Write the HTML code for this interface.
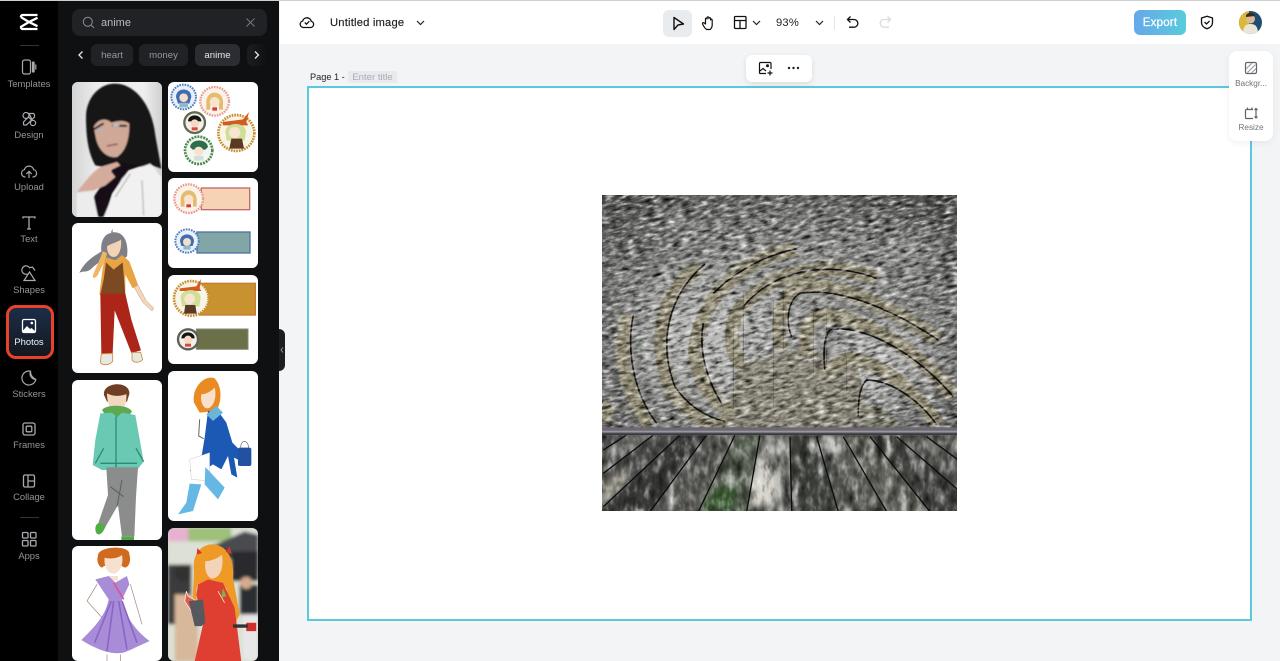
<!DOCTYPE html>
<html><head><meta charset="utf-8"><style>
*{box-sizing:border-box;margin:0;padding:0}
html,body{width:1280px;height:661px;overflow:hidden;background:#f3f4f6;font-family:"Liberation Sans",sans-serif}
.a{position:absolute}
.rl{position:absolute;left:0;width:58px;text-align:center;font-size:9.4px;color:#93959a;line-height:11px;margin-top:-1px}
.card{position:absolute;width:90px;background:#fff;border-radius:6px;overflow:hidden}
.card svg{display:block;width:90px}
.chip{position:absolute;top:44px;height:22px;border-radius:6px;background:#212226;color:#96989d;font-size:9.6px;line-height:23px;text-align:center}
svg.i{position:absolute;overflow:visible;fill:none}
</style></head><body>
<div class="a" style="left:0;top:0;width:1280px;height:1px;background:#cfcfcf;z-index:9"></div>
<div class="a" style="left:0;top:0;width:58px;height:661px;background:#000"></div>
<div class="a" style="left:58px;top:0;width:221px;height:661px;background:#0f1012"></div>
<div class="a" style="left:280px;top:1px;width:1000px;height:43px;background:#fff"></div>

<!-- rail -->
<svg class="i" style="left:18px;top:13px" width="22" height="18" viewBox="0 0 22 18"><path d="M3 4.200L11 9 3 13.800a1.800 1.800 0 0 0 1.500 2.200H19.500M3 4.200A1.800 1.800 0 0 1 4.500 2H19.500M19.500 4.800L11 9 19.500 13.200" stroke="#fff" stroke-width="2.300"/></svg>
<div class="a" style="left:20px;top:45px;width:19px;height:1px;background:#333"></div>
<svg class="i" style="left:20px;top:58px" width="18" height="18" stroke="#a8aaaf" stroke-width="1.200"><rect x="2.500" y="2" width="8" height="14" rx="2"/><rect x="12.500" y="4" width="1.600" height="10" rx=".8" fill="#a8aaaf"/><path d="M15.800 6.500v5"/></svg>
<div class="rl" style="top:79px">Templates</div>
<svg class="i" style="left:20px;top:110px" width="18" height="18" stroke="#a8aaaf" stroke-width="1.200"><circle cx="6" cy="5.500" r="3"/><path d="M9 3.500h4.500l1 1V7L12 9.500zM3.500 14.500V12l5-5 3 3-5 5H4z"/><circle cx="13" cy="13" r="2.600"/></svg>
<div class="rl" style="top:130px">Design</div>
<svg class="i" style="left:20px;top:162px" width="18" height="18" stroke="#a8aaaf" stroke-width="1.200"><path d="M5.500 15H5a3.700 3.700 0 0 1-.6-7.300 4.800 4.800 0 0 1 9.300 0A3.700 3.700 0 0 1 13.200 15h-.7"/><path d="M9 16V9.500M6.300 12L9 9.300 11.700 12"/></svg>
<div class="rl" style="top:182px">Upload</div>
<svg class="i" style="left:21px;top:215px" width="16" height="16" stroke="#a8aaaf" stroke-width="1.300"><path d="M2 3.500V2h12v1.500M8 2v12M6 14h4"/></svg>
<div class="rl" style="top:234px">Text</div>
<svg class="i" style="left:20px;top:265px" width="18" height="18" stroke="#a8aaaf" stroke-width="1.200"><path d="M7.500 9A4.200 4.200 0 1 1 9.500 2.700L12.500 2l2.500 3.500"/><path d="M9.500 7L15 15.500H4z"/></svg>
<div class="rl" style="top:285px">Shapes</div>

<div class="a" style="left:6px;top:305px;width:48px;height:54px;border:3px solid #e8432a;border-radius:10px;background:linear-gradient(180deg,#1c2d49,#14181f)"></div>
<svg class="i" style="left:21px;top:318px" width="16" height="16"><rect x="1.500" y="1.500" width="13" height="13" rx="1.500" stroke="#fff" stroke-width="1.300"/><path d="M2 12.500L6 8l3 3 1.500-1 3.500 3v1.500H2z" fill="#fff"/><circle cx="10.800" cy="5" r="1.300" fill="#fff"/></svg>
<div class="rl" style="top:337px;color:#f2f3f5">Photos</div>

<svg class="i" style="left:20px;top:369px" width="18" height="18" stroke="#a8aaaf" stroke-width="1.200"><path d="M10.500 2.200a7 7 0 1 0 5.300 8.300A6 6 0 0 1 10.500 2.200z"/><path d="M10.500 2.200c0 2 0 5 5.300 8.300"/></svg>
<div class="rl" style="top:389px">Stickers</div>
<svg class="i" style="left:21px;top:421px" width="16" height="16" stroke="#a8aaaf" stroke-width="1.300"><rect x="2" y="2" width="12" height="12" rx="2"/><rect x="5.200" y="5.200" width="5.600" height="5.600" rx="1"/></svg>
<div class="rl" style="top:440px">Frames</div>
<svg class="i" style="left:21px;top:473px" width="16" height="16" stroke="#a8aaaf" stroke-width="1.300"><rect x="2.500" y="2" width="11" height="12" rx="1.500"/><path d="M7 2v12M7 8h6.500"/></svg>
<div class="rl" style="top:492px">Collage</div>
<div class="a" style="left:20px;top:517px;width:19px;height:1px;background:#333"></div>
<svg class="i" style="left:21px;top:531px" width="16" height="16" stroke="#a8aaaf" stroke-width="1.300"><rect x="1.500" y="1.500" width="5.500" height="5.500" rx="1"/><rect x="9.500" y="1.500" width="5.500" height="5.500" rx="1"/><rect x="1.500" y="9.500" width="5.500" height="5.500" rx="1"/><rect x="9.500" y="9.500" width="5.500" height="5.500" rx="1"/></svg>
<div class="rl" style="top:551px">Apps</div>

<!-- search -->
<div class="a" style="left:72px;top:9px;width:195px;height:27px;background:#212226;border-radius:8px"></div>
<svg class="i" style="left:82px;top:16px" width="13" height="13" stroke="#8e9095" stroke-width="1"><circle cx="5.800" cy="5.800" r="4.500"/><path d="M9.200 9.200L12 12"/></svg>
<div class="a" style="left:101px;top:17px;font-size:11px;line-height:13px;color:#b9bbc0">anime</div>
<svg class="i" style="left:246px;top:18px" width="9" height="9" stroke="#77797e" stroke-width="1"><path d="M.5.500l8 8M8.500.500l-8 8"/></svg>
<svg class="i" style="left:78px;top:51px" width="6" height="8" stroke="#e8e8ea" stroke-width="1.300"><path d="M4.500.500L1 4l3.500 3.500"/></svg>
<div class="chip" style="left:91px;width:42px">heart</div>
<div class="chip" style="left:139px;width:49px">money</div>
<div class="chip" style="left:195px;width:45px;background:#2c2d32;color:#e4e5e8">anime</div>
<div class="chip" style="left:247px;width:20px;background:linear-gradient(90deg,#1c1d20,#0f1012)"></div>
<svg class="i" style="left:254px;top:51px" width="6" height="8" stroke="#e8e8ea" stroke-width="1.300"><path d="M1 .500L4.500 4 1 7.500"/></svg>

<!-- cards -->
<div class="card" style="left:72px;top:82px;height:135px;background:#e6e6e6"><svg viewBox="0 0 270 405" height="135">
<defs><linearGradient id="bgp" x1="0" y1="0" x2="1" y2="0"><stop offset="0" stop-color="#d4d4d4"/><stop offset=".3" stop-color="#eeeeee"/><stop offset=".8" stop-color="#eeeeee"/><stop offset="1" stop-color="#d0d0d0"/></linearGradient><filter id="sb"><feGaussianBlur stdDeviation="2.500"/></filter></defs>
<rect width="270" height="405" fill="url(#bgp)"/>
<g filter="url(#sb)">
<path d="M125 5C75 8 42 55 42 105 42 170 50 215 70 250L130 262 240 250 268 260 250 160C240 70 190 3 125 5z" fill="#151315"/>
<path d="M135 240L65 345 75 405H100L120 335 170 265 215 250z" fill="#121012"/>
<path d="M65 135C78 108 105 108 118 122 135 116 160 114 172 125 172 165 165 205 135 225 105 230 80 205 72 170z" fill="#d0a897"/>
<path d="M65 142l30-18M120 130l45 2" stroke="#2a2426" stroke-width="6" fill="none"/>
<ellipse cx="85" cy="145" rx="10" ry="4" fill="#a9b6bd"/><ellipse cx="132" cy="130" rx="11" ry="4" fill="#b0c2cb"/>
<path d="M105 192l32-6" stroke="#a05f5c" stroke-width="5"/>
<path d="M15 330C35 305 60 270 85 255L135 240 145 250 115 265 130 285 100 310 65 325z" fill="#d5ab9b"/>
<path d="M15 332L62 330 78 405H14z" fill="#ececec"/>
<path d="M170 268L235 245 268 285 270 405H95L120 345 150 290z" fill="#f1f1f1"/>
<path d="M175 275L130 345M210 295L215 400" stroke="#b9b9bd" stroke-width="4" fill="none"/>
</g>
</svg></div>

<div class="card" style="left:168px;top:82px;height:90px"><svg viewBox="0 0 270 270" height="90">
<circle cx="47" cy="45" r="37" fill="#eaf0fa" stroke="#4d7ec4" stroke-width="6" stroke-dasharray="5 3"/><path d="M24 45c0-30 46-30 46 0l-6 20H30z" fill="#3f6db0"/><circle cx="47" cy="47" r="13" fill="#f6dccb"/><path d="M34 62h26v14H34z" fill="#8fb9c9"/>
<circle cx="140" cy="58" r="43" fill="#fbf3ea" stroke="#e89a92" stroke-width="7" stroke-dasharray="5 3"/><path d="M115 65c-4-44 54-44 50 0v18h-12V55h-26v28h-12z" fill="#e3bd6d"/><circle cx="140" cy="60" r="15" fill="#f9e3cf"/><rect x="133" y="76" width="14" height="10" fill="#d63c3c"/>
<circle cx="80" cy="122" r="31" fill="#f5eee6" stroke="#5f6a52" stroke-width="7"/><path d="M60 118c0-24 40-24 40 0z" fill="#141414"/><circle cx="80" cy="124" r="12" fill="#f6d9c5"/><rect x="71" y="136" width="18" height="9" fill="#d44"/>
<circle cx="92" cy="205" r="41" fill="#f3f5ee" stroke="#4b8a55" stroke-width="8" stroke-dasharray="6 3"/><path d="M66 195c4-26 50-26 54 0l-8 8H74z" fill="#2d6d4a"/><circle cx="92" cy="208" r="14" fill="#f8e1cf"/><path d="M78 222h28v14H78z" fill="#cfe0df"/>
<circle cx="205" cy="153" r="54" fill="#f8f4e8" stroke="#c88d2d" stroke-width="8" stroke-dasharray="5 3"/><path d="M165 120l60-8 18-22-8 30 6 10H165z" fill="#d45a1f"/><path d="M172 150c0-32 62-32 62 0l-4 26h-54z" fill="#cfdf98"/><circle cx="200" cy="152" r="17" fill="#f9e4d2"/><path d="M190 170h32l6 30h-44z" fill="#5a3a22"/>
</svg></div>

<div class="card" style="left:168px;top:178px;height:90px"><svg viewBox="0 0 270 270" height="90">
<rect x="100" y="30" width="145" height="65" fill="#f6d3b5" stroke="#c06a6a" stroke-width="4"/>
<circle cx="62" cy="62" r="43" fill="#fbf3ea" stroke="#e89a92" stroke-width="7" stroke-dasharray="5 3"/><path d="M38 70c-4-44 52-44 48 0v16H75V58H50v28H38z" fill="#e3bd6d"/><circle cx="62" cy="64" r="14" fill="#f9e3cf"/><rect x="55" y="79" width="14" height="9" fill="#d63c3c"/>
<rect x="87" y="162" width="159" height="63" fill="#82a6a6" stroke="#4c74a8" stroke-width="4"/>
<circle cx="57" cy="189" r="35" fill="#eaf0fa" stroke="#4d7ec4" stroke-width="6" stroke-dasharray="5 3"/><path d="M36 190c0-28 42-28 42 0l-4 14H40z" fill="#3f6db0"/><circle cx="57" cy="192" r="12" fill="#f6dccb"/><rect x="46" y="203" width="22" height="12" fill="#8fb9c9"/>
</svg></div>

<div class="card" style="left:168px;top:275px;height:89px"><svg viewBox="0 0 270 267" height="89">
<rect x="95" y="25" width="167" height="95" fill="#c8922e" stroke="#c87838" stroke-width="4"/>
<circle cx="70" cy="70" r="52" fill="#f8f4e8" stroke="#c88d2d" stroke-width="8" stroke-dasharray="5 3"/><path d="M35 40l50-6 14-22-4 28 5 8H35z" fill="#d45a1f"/><path d="M38 68c0-30 60-30 60 0l-4 26H42z" fill="#cfdf98"/><circle cx="65" cy="72" r="16" fill="#f9e4d2"/><path d="M52 90h30l4 26H48z" fill="#5a3a22"/>
<rect x="85" y="162" width="155" height="61" fill="#6c7048" stroke="#868a78" stroke-width="3"/>
<circle cx="60" cy="193" r="30" fill="#f5eee6" stroke="#5f5f5a" stroke-width="7"/><path d="M40 190c0-24 40-24 40 0z" fill="#141414"/><circle cx="60" cy="194" r="12" fill="#f6d9c5"/><rect x="51" y="206" width="18" height="9" fill="#d44"/>
</svg></div>

<div class="card" style="left:72px;top:223px;height:150px"><svg viewBox="0 0 270 450" height="150">
<path d="M122 18c-2 4-6 8-4 12C95 32 85 60 88 85 75 95 40 110 22 150 35 142 40 150 55 140 70 125 80 118 95 112L112 112 152 110 165 100C170 65 160 25 122 28z" fill="#7f8085"/>
<path d="M105 70c12-8 30-12 42-20 3 25-6 52-22 52-12 0-20-14-20-32z" fill="#f3d3b3"/>
<path d="M62 160C70 135 85 110 92 85L105 90 100 112 80 150C75 165 62 168 62 160z" fill="#f1b565"/>
<path d="M100 102L130 112 150 96 172 115 198 185 182 196 160 155 160 215H82L92 135z" fill="#e8a342"/>
<path d="M102 118L125 140 152 118 160 215H85L95 170z" fill="#7c4a22"/>
<path d="M186 192L198 186 222 232 245 255 240 264 212 238z" fill="#f5d6b8" stroke="#8d7766" stroke-width="1"/>
<path d="M85 212L160 212 178 290 207 382 178 390 128 262 122 390 88 392z" fill="#ab2518"/>
<path d="M88 392H122L122 415C112 428 90 428 85 418zM180 388h26l6 22c-8 10-28 10-32 0z" fill="#e8e8e2" stroke="#c98d3a" stroke-width="2.500"/>
</svg></div>

<div class="card" style="left:72px;top:380px;height:160px"><svg viewBox="0 0 270 480" height="160">
<path d="M96 45C90 5 175 0 172 42L165 65 105 65z" fill="#6e3f25"/>
<path d="M105 40c20 10 40 10 58 2 2 30-8 52-30 54-18-2-28-26-28-56z" fill="#f3d8bf"/>
<path d="M90 90C100 72 170 72 180 95L160 120H110z" fill="#5ea84f"/>
<path d="M85 100L120 98 135 112 150 98 190 105 215 245 195 270H90L62 255 70 180z" fill="#69c9b3"/>
<path d="M132 110V262M70 250L95 205M215 245L192 205M85 250H195" stroke="#2f8a73" stroke-width="4" fill="none"/>
<path d="M103 262H198L192 350 187 470H150L138 375 95 450 78 432 108 345z" fill="#8b8c8c"/>
<path d="M150 300L135 380M115 320l40 30" stroke="#5c5d5e" stroke-width="3" fill="none"/>
<path d="M70 445C72 425 88 425 100 440 90 470 70 470 70 445zM148 470h38v10h-38z" fill="#4caf3f"/>
</svg></div>

<div class="card" style="left:72px;top:546px;height:115px"><svg viewBox="0 0 270 345" height="115">
<path d="M78 30C75 0 175-5 172 25 180 50 165 75 150 60L95 60C90 75 70 50 78 30z" fill="#d06a1e"/>
<path d="M98 35c15 5 40 2 52-8 6 30-8 55-25 56-18 0-30-20-27-48z" fill="#f7e0cf"/>
<path d="M112 90h26v14h-26z" fill="#f7e0cf"/>
<path d="M70 100L110 90 130 110 165 90 172 115 150 160C158 220 210 270 233 285 200 300 180 310 155 320 125 325 90 320 28 282 70 240 100 210 110 160z" fill="#a98cd8"/>
<path d="M125 165L105 315M140 165L165 310M118 165l-50 125M150 165l45 125" stroke="#8a66c4" stroke-width="5" fill="none"/>
<path d="M75 115L45 165 90 215M175 115L210 235" stroke="#9b7f70" stroke-width="2" fill="none"/>
<path d="M125 110l30 50" stroke="#d8558e" stroke-width="5"/>
<path d="M105 325v20M145 325v20" stroke="#a08070" stroke-width="2"/>
</svg></div>

<div class="card" style="left:168px;top:371px;height:150px"><svg viewBox="0 0 270 450" height="150">
<path d="M78 95C70 50 110 10 140 22 165 50 160 95 145 120L95 125z" fill="#e98a22"/>
<path d="M100 70c15 0 30-10 40-20 8 30-5 62-22 62-12 0-22-20-18-42z" fill="#f9e0cc"/>
<path d="M120 120h30l25 35 18 60 40 40-15 15-20-10 10 60-18-10-10-55-20 40-25-15-30 20-40 0 35-40 10-60z" fill="#1b59b5"/>
<path d="M145 105L115 130 135 150 165 125z" fill="#6cb4d8"/>
<path d="M95 145l-3 50 15 8" stroke="#666" stroke-width="3" fill="none"/>
<path d="M65 265L125 245 125 330 70 325z" fill="#fff" stroke="#aaa"/>
<path d="M65 338L100 340 75 420 30 430 55 395z" fill="#65b8e4"/>
<path d="M112 288L170 350 150 385 110 340z" fill="#65b8e4"/>
<rect x="210" y="230" width="40" height="55" rx="6" fill="#21519f"/><path d="M218 230c0-25 22-25 24 0" stroke="#666" stroke-width="2" fill="none"/>
</svg></div>

<div class="card" style="left:168px;top:528px;height:133px;background:#cfd8c8"><svg viewBox="0 0 270 400" height="133">
<defs><filter id="bl"><feGaussianBlur stdDeviation="5"/></filter></defs>
<g filter="url(#bl)"><rect width="270" height="400" fill="#dce0d6"/><rect x="0" width="100" height="40" fill="#e8b0d0"/><rect x="60" width="130" height="40" fill="#9dc07a"/>
<path d="M120 60L230 10 270 20V130L130 70z" fill="#4a4c4f"/><rect x="190" y="70" width="80" height="90" fill="#2c2c2e"/>
<rect x="0" y="110" width="70" height="180" fill="#3a3a3c"/><circle cx="45" cy="135" r="25" fill="#32302f"/>
<path d="M20 200h70v200H20z" fill="#d8b89a"/><rect x="215" y="170" width="55" height="90" fill="#2a2d33"/><circle cx="235" cy="165" r="18" fill="#d5ab8e"/><rect x="225" y="260" width="45" height="140" fill="#e7e7e7"/></g>
<path d="M78 130C70 70 110 45 140 50 185 55 200 110 195 150L215 260 195 300 175 180 90 170C80 190 90 200 80 240 70 210 78 170 78 130z" fill="#ef9a26"/>
<path d="M88 60l14 15-16 5zM185 55l-12 17 18 6z" fill="#d9352a"/>
<path d="M112 100c15 0 40-10 50-20 6 40-5 68-28 72-15 0-26-25-22-52z" fill="#f4d3bb"/>
<path d="M90 170L120 155 165 165 200 240 220 400H80L105 290 85 200z" fill="#df3f30"/>
<path d="M150 190l20 35M95 225L60 205 55 190l-5 30 20 30z" stroke="#fff" stroke-width="2" fill="#e35b50"/>
<path d="M62 220L105 215 112 285 100 295H80z" fill="#55585c"/>
<path d="M165 180l-5 30 15-5z" fill="#79b64c"/>
<path d="M235 285h30v25h-30z" fill="#cf2f2a"/><path d="M195 290h45v10h-45z" fill="#333"/>
</svg></div>

<div class="a" style="left:279px;top:329px;width:6px;height:42px;background:#1d1e22;border-radius:0 6px 6px 0"></div>
<svg class="i" style="left:280px;top:347px" width="4" height="6" stroke="#aaa" stroke-width=".8"><path d="M3 .5L1 3l2 2.500"/></svg>

<!-- header -->
<svg class="i" style="left:299px;top:14px" width="16" height="16" stroke="#111" stroke-width="1.300"><path d="M4.500 13.500h7a3.200 3.200 0 0 0 .7-6.300A4.400 4.400 0 0 0 3.700 7 3.300 3.300 0 0 0 4.500 13.500z"/><path d="M5.800 8.500L7.500 10.200 10.300 7.200"/></svg>
<div class="a" style="left:330px;top:17px;font-size:11.2px;line-height:13px;color:#1c1d20;letter-spacing:.2px;-webkit-text-stroke:.15px #1c1d20">Untitled image</div>
<svg class="i" style="left:416px;top:20px" width="9" height="6" stroke="#222" stroke-width="1.200"><path d="M1 1l3.500 3.500L8 1"/></svg>

<div class="a" style="left:663px;top:10px;width:29px;height:27px;background:#e9ecef;border-radius:6px"></div>
<svg class="i" style="left:671px;top:16px" width="14" height="15" stroke="#111" stroke-width="1.400"><path d="M3 1.500L12.500 8 7 9 3 13.500z" stroke-linejoin="round"/></svg>
<svg class="i" style="left:701px;top:15px" width="15" height="16" stroke="#111" stroke-width="1.200"><path d="M4 13C2.500 11 1.500 9.500 1.500 8.500s1.200-1.200 2-.3L4.500 9V4c0-1.200 1.500-1.200 1.600 0V2.700c0-1.200 1.700-1.200 1.800 0V3.500c0-1.100 1.600-1.100 1.700 0V5c.1-1 1.500-1 1.600 0V10c0 2-1 3.500-2 4.500H5.500z" stroke-linejoin="round"/></svg>
<svg class="i" style="left:733px;top:15px" width="15" height="15" stroke="#111" stroke-width="1.300"><rect x="1.500" y="1.500" width="11.500" height="12" rx="1"/><path d="M1.500 5.500h11.500M7 5.500v8"/></svg>
<svg class="i" style="left:752px;top:20px" width="9" height="6" stroke="#222" stroke-width="1.200"><path d="M1 1l3.500 3.500L8 1"/></svg>
<div class="a" style="left:776px;top:17px;font-size:11.2px;line-height:13px;color:#1c1d20;letter-spacing:.2px">93%</div>
<svg class="i" style="left:815px;top:20px" width="9" height="6" stroke="#222" stroke-width="1.200"><path d="M1 1l3.500 3.500L8 1"/></svg>
<div class="a" style="left:834px;top:16px;width:1px;height:14px;background:#e4e5e8"></div>
<svg class="i" style="left:846px;top:15px" width="14" height="15" stroke="#111" stroke-width="1.300"><path d="M4.500 1.500L1.500 4.500l3 3M1.500 4.500H8a3.800 3.800 0 0 1 0 7.700H3"/></svg>
<svg class="i" style="left:878px;top:15px" width="14" height="15" stroke="#d9dbdf" stroke-width="1.300"><path d="M9.500 1.500l3 3-3 3M12.500 4.500H6a3.800 3.800 0 0 0 0 7.700h5"/></svg>

<div class="a" style="left:1134px;top:10px;width:52px;height:25px;border-radius:6px;background:linear-gradient(90deg,#67a8ea,#59cbdc);color:#fff;font-size:11.5px;line-height:26px;text-align:center;letter-spacing:.2px;-webkit-text-stroke:.25px #fff">Export</div>
<svg class="i" style="left:1200px;top:15px" width="14" height="15" stroke="#111" stroke-width="1.300"><path d="M7 1.200L12.500 3v4.500c0 3-2.500 5.300-5.500 6.300C4 12.800 1.500 10.500 1.500 7.500V3z" stroke-linejoin="round"/><path d="M4.500 7L6.500 9l3-3"/></svg>
<svg class="a" style="left:1239px;top:11px" width="23" height="23" viewBox="0 0 23 23"><defs><clipPath id="av"><circle cx="11.500" cy="11.500" r="11.500"/></clipPath></defs><g clip-path="url(#av)"><rect width="23" height="23" fill="#1f4f70"/><rect width="10" height="23" fill="#dcb83a"/><circle cx="11.500" cy="8" r="4.500" fill="#e0b896"/><path d="M7 4c2-3 8-3 9 1l-9 1z" fill="#3a2c20"/><path d="M4 23c0-8 3-10 7.500-10S19 15 19 23z" fill="#e9e6d9"/></g></svg>

<!-- canvas -->
<div class="a" style="left:310px;top:72px;font-size:9.2px;line-height:11px;color:#1f2023">Page 1 -</div>
<div class="a" style="left:348px;top:71px;width:49px;height:12px;background:#e8eaed;border-radius:2px;font-size:9.6px;line-height:13px;color:#a9acb2;text-align:center">Enter title</div>
<div class="a" style="left:307px;top:86px;width:945px;height:535px;background:#fff;border:2px solid #5cc8dd"></div>
<div class="a" style="left:746px;top:55px;width:66px;height:27px;background:#fff;border-radius:6px;box-shadow:0 2px 6px rgba(0,0,0,.1)"></div>
<svg class="i" style="left:758px;top:61px" width="15" height="15" stroke="#111" stroke-width="1.200"><path d="M13 8V2.500a1 1 0 0 0-1-1H2.500a1 1 0 0 0-1 1V11.500a1 1 0 0 0 1 1H8"/><path d="M2 10l3-2.500 3 2.500" /><circle cx="9.500" cy="4.800" r=".9" fill="#111"/><path d="M12 9.500v5M9.500 12h5"/></svg>
<svg class="i" style="left:787px;top:66px" width="13" height="4"><circle cx="2" cy="2" r="1.200" fill="#222"/><circle cx="6.500" cy="2" r="1.200" fill="#222"/><circle cx="11" cy="2" r="1.200" fill="#222"/></svg>

<div class="a" style="left:1229px;top:51px;width:44px;height:90px;background:#fff;border-radius:8px;box-shadow:0 2px 8px rgba(0,0,0,.06)"></div>
<svg class="i" style="left:1244px;top:61px" width="14" height="14" stroke="#5f6269" stroke-width="1.200"><rect x="1.500" y="1.500" width="11" height="11" rx="1.500"/><path d="M2 8L8 2M3.500 11.500L11.500 3.500M7.500 12L12 7.500" stroke="#9a9da3"/></svg>
<div class="a" style="left:1229px;width:44px;top:79px;text-align:center;font-size:8.2px;line-height:10px;color:#70737a">Backgr...</div>
<svg class="i" style="left:1244px;top:106px" width="14" height="14" stroke="#5f6269" stroke-width="1.200"><path d="M1.500 4.500V11.500a1 1 0 0 0 1 1H9M1.500 4.500a1 1 0 0 1 1-1H9M3.500 1.500V3.500M8 1.500V3.500M12 2.500v9.500M10.500 4L12 2.500 13.500 4M10.500 10.500L12 12l1.500-1.500"/></svg>
<div class="a" style="left:1229px;width:44px;top:123px;text-align:center;font-size:8.2px;line-height:10px;color:#70737a">Resize</div>

<!-- main image -->
<svg class="a" style="left:602px;top:195px;isolation:isolate" width="355" height="316" viewBox="0 0 355 316">
<defs>
<filter id="tx" x="0" y="0" width="100%" height="100%" color-interpolation-filters="sRGB"><feTurbulence type="fractalNoise" baseFrequency=".11 .3" numOctaves="3" seed="7"/><feColorMatrix type="matrix" values=".75 .75 0 0 -.25  .75 .75 0 0 -.25  .75 .75 0 0 -.25  0 0 0 0 1"/></filter>
<filter id="tx2" x="0" y="0" width="100%" height="100%" color-interpolation-filters="sRGB"><feTurbulence type="fractalNoise" baseFrequency=".04 .02" numOctaves="3" seed="3"/><feColorMatrix type="matrix" values=".6 .6 0 0 -.1  .6 .6 0 0 -.1  .6 .6 0 0 -.1  0 0 0 0 1"/></filter>
<filter id="fb" x="-20%" y="-20%" width="140%" height="140%"><feGaussianBlur stdDeviation="9"/></filter>
<radialGradient id="vg" cx=".5" cy=".6" r=".8"><stop offset=".45" stop-color="#000" stop-opacity="0"/><stop offset="1" stop-color="#000" stop-opacity=".5"/></radialGradient>
<radialGradient id="lt" cx=".5" cy=".5" r=".5"><stop offset="0" stop-color="#fff" stop-opacity=".4"/><stop offset="1" stop-color="#fff" stop-opacity="0"/></radialGradient>
<clipPath id="wall"><rect width="355" height="233"/></clipPath>
</defs>
<g clip-path="url(#wall)">
<rect width="355" height="238" fill="#8d8d8a"/>
<ellipse cx="110" cy="140" rx="110" ry="80" fill="url(#lt)"/>
<ellipse cx="280" cy="170" rx="70" ry="50" fill="url(#lt)"/>
<ellipse cx="75" cy="30" rx="50" ry="22" fill="url(#lt)" opacity=".6"/>
<ellipse cx="310" cy="50" rx="40" ry="30" fill="url(#lt)" opacity=".7"/>
<rect width="355" height="238" fill="url(#vg)"/>
<g transform="translate(-2 -5) scale(.33333)" fill="none" stroke-linecap="butt">
<path d="M420 520L620 470 690 510 770 520 790 600 770 715H330C380 670 400 600 420 520z" fill="#8a8678" stroke="none"/>
<path d="M780 640C850 640 890 680 900 715H780z" fill="#82806f" stroke="none"/>
<g stroke="#928c75" stroke-width="42">
<path d="M82 375C50 480 75 610 150 705"/>
<path d="M300 230C190 300 150 450 215 600 255 670 320 700 380 710"/>
<path d="M585 180C420 200 290 340 285 490 295 570 330 630 400 670"/>
<path d="M830 265C660 205 500 250 410 370 385 430 395 500 430 530"/>
<path d="M1015 450C860 340 680 270 590 290 545 320 525 400 545 480"/>
<path d="M1060 620C950 470 780 380 670 375 625 385 610 420 625 500"/>
<path d="M1010 705C950 600 850 530 760 505 720 510 690 530 680 560"/>
<path d="M30 640L10 690" stroke-width="40"/>
</g>
<g stroke="#141311" stroke-width="5">
<path d="M100 375C80 470 95 600 170 700"/>
<path d="M315 222C210 310 170 450 225 590 265 650 320 680 375 695"/>
<path d="M590 176C520 190 420 230 340 310"/>
<path d="M310 400C295 480 320 570 365 640"/>
<path d="M830 265C680 210 520 240 430 350"/>
<path d="M1015 450C880 360 720 290 600 310 565 330 555 390 575 440"/>
<path d="M1060 620C950 490 790 400 690 420 670 440 670 500 675 540"/>
<path d="M1010 705C960 630 870 570 800 570 780 590 775 620 775 680"/>
</g>
<g stroke="#5a574e" stroke-width="3" opacity=".7">
<path d="M430 310V520M520 330V660M550 300V480M640 370V560M680 370V540M740 500V620M400 400V660"/>
</g>
</g>
<g transform="rotate(-14 177 120)" style="mix-blend-mode:hard-light"><rect x="-60" y="-70" width="480" height="380" filter="url(#tx)"/></g>
</g>
<!-- floor -->
<g transform="translate(-2 -5) scale(.33333)">
<rect x="0" y="730" width="1080" height="240" fill="#4e4f4c"/>
<path d="M240 735L10 950V1000H150L320 735z" fill="#3c3c3b"/>
<path d="M0 800L80 735H160L0 855z" fill="#5e5e5a"/>
<path d="M320 735H405L295 970H150z" fill="#5a5a56"/>
<path d="M405 735H480L440 970H295z" fill="#5a6254"/>
<path d="M480 735H570L575 970H440z" fill="#7c7c76"/>
<path d="M570 740H650L715 970H575z" fill="#424540"/>
<path d="M650 740H730L860 970H715z" fill="#5a5b56"/>
<path d="M730 740H810L990 970H860z" fill="#66665f"/>
<path d="M810 740H890L1075 900V970H990z" fill="#464643"/>
<path d="M890 740H1080V810L1075 900z" fill="#565652"/>
<g filter="url(#fb)">
<path d="M470 810C500 800 525 820 530 890 525 940 485 950 455 945z" fill="#d6d4cb"/>
<path d="M310 950C340 890 380 880 410 890L400 965H310z" fill="#3c5c36"/>
<path d="M10 880L90 830 60 900 10 950z" fill="#a5a295"/>
<path d="M70 760L150 730 110 750z" fill="#ccc"/>
<path d="M660 740h60l10 40-40 8z" fill="#c5c5c0"/>
</g>
<rect x="0" y="730" width="1080" height="240" filter="url(#tx2)" style="mix-blend-mode:hard-light"/>
<g stroke="#0c0c0c" stroke-width="4" fill="none">
<path d="M480 735L440 965M570 740L575 965M650 740L715 965M730 740L860 965M810 740L990 965M890 740L1075 900M980 740L1075 810M405 735L295 965M320 735L150 965M240 735L10 950M160 735L10 850M80 735L10 780"/>
</g>
<rect x="0" y="712" width="1080" height="24" fill="#6b6870"/>
<rect x="0" y="722" width="1080" height="5" fill="#a9a4b0" opacity=".75"/>
<rect x="0" y="730" width="1080" height="5" fill="#3a3a3c"/>
</g>
</svg>
</body></html>
